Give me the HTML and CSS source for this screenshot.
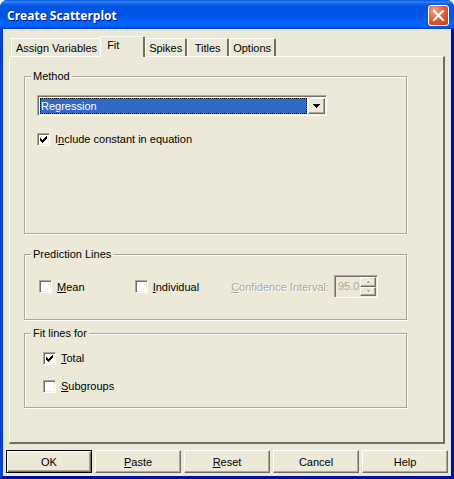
FILE: index.html
```
<!DOCTYPE html>
<html lang="en">
<head>
    <meta charset="UTF-8">
    <meta name="viewport" content="width=device-width, initial-scale=1.0">
    <title>Create Scatterplot</title>
    <link rel="stylesheet" href="styles.css">
</head>
<body>
    <main class="window">
        <header class="titlebar">
            <h1 class="title">Create Scatterplot</h1>
            <button class="close" type="button" aria-label="Close">
                <svg width="19" height="19" viewBox="0 0 19 19">
                    <path d="M5 5l9 9M14 5l-9 9" stroke="#fff" stroke-width="2" stroke-linecap="square"/>
                </svg>
            </button>
        </header>
        <form class="content">
            <div class="tabs" role="tablist">
                <button class="tab tab-first" type="button" role="tab">Assign Variables</button>
                <button class="tab active" type="button" role="tab" aria-selected="true">Fit</button>
                <button class="tab" type="button" role="tab">Spikes</button>
                <button class="tab" type="button" role="tab">Titles</button>
                <button class="tab" type="button" role="tab">Options</button>
            </div>
            <section class="panel" role="tabpanel">
                <fieldset class="group group-method">
                    <legend>Method</legend>
                    <div class="method-body">
                        <div class="combo">
                            <select class="combo-select" aria-label="Method">
                                <option>Regression</option>
                            </select>
                            <span class="combo-arrow">
                                <svg width="7" height="4" viewBox="0 0 7 4" shape-rendering="crispEdges">
                                    <path d="M0 0h7v1h-1v1h-1v1h-1v1h-1v-1h-1v-1h-1v-1h-1z"/>
                                </svg>
                            </span>
                        </div>
                        <label class="check"><input type="checkbox" checked><span>I<u>n</u>clude constant in equation</span></label>
                    </div>
                </fieldset>
                <fieldset class="group group-lines">
                    <legend>Prediction Lines</legend>
                    <div class="lines-body">
                        <label class="check check-mean"><input type="checkbox"><span><u>M</u>ean</span></label>
                        <label class="check"><input type="checkbox"><span><u>I</u>ndividual</span></label>
                        <div class="interval">
                            <label class="interval-label" for="interval"><u>C</u>onfidence Interval:</label>
                            <div class="spinner">
                                <input class="spinner-input" id="interval" type="text" value="95.0" disabled>
                                <div class="spinner-buttons">
                                    <button class="spin" type="button" aria-label="Increase" disabled>
                                        <svg width="3" height="2" viewBox="0 0 3 2" shape-rendering="crispEdges"><path d="M1 0h1v1h1v1h-3v-1h1z" fill="#aca899"/></svg>
                                    </button>
                                    <button class="spin" type="button" aria-label="Decrease" disabled>
                                        <svg width="3" height="2" viewBox="0 0 3 2" shape-rendering="crispEdges"><path d="M0 0h3v1h-1v1h-1v-1h-1z" fill="#aca899"/></svg>
                                    </button>
                                </div>
                            </div>
                        </div>
                    </div>
                </fieldset>
                <fieldset class="group">
                    <legend>Fit lines for</legend>
                    <div class="for-body">
                        <label class="check"><input type="checkbox" checked><span><u>T</u>otal</span></label>
                        <label class="check"><input type="checkbox"><span><u>S</u>ubgroups</span></label>
                    </div>
                </fieldset>
            </section>
            <footer class="actions">
                <button class="btn default" type="button">OK</button>
                <button class="btn" type="button"><u>P</u>aste</button>
                <button class="btn" type="button"><u>R</u>eset</button>
                <button class="btn" type="button">Cancel</button>
                <button class="btn" type="button">Help</button>
            </footer>
        </form>
    </main>
</body>
</html>
```
FILE: styles.css
```
:root{
    --face: #ece9d8;
    --shadow: #aca899;
    --dark: #716f64;
    --white: #fff;
    --highlight: #316ac5;
}
*,*::before,*::after{
    box-sizing: border-box;
    margin: 0;
    padding: 0;
}
body{
    font: 11px/14px "Liberation Sans", Arial, sans-serif;
    color: #000;
    background-color: var(--white);
}
button,input,select{
    font: inherit;
    color: inherit;
    border-radius: 0;
}
u{
    text-underline-offset: 1px;
}
.window{
    display: flex;
    flex-direction: column;
    min-height: 100vh;
    border: solid;
    border-width: 0 3px 3px;
    border-color: #0831d9 #0011a0 #0011a0 #0640dc;
    border-radius: 8px 8px 0 0;
    background-color: var(--face);
}
.titlebar{
    display: flex;
    align-items: center;
    justify-content: space-between;
    height: 29px;
    margin: 0 -3px;
    padding: 2px 5px 0 7px;
    border-radius: 7px 7px 0 0;
    background: linear-gradient(#0a4fd8 0, #2f87f5 2px, #0b5ee6 4px, #0054e3 8px, #0055e5 16px, #0066ff 23px, #0062f5 26px, #003dd7 29px);
}
.title{
    font: bold 12px/18px "Open Sans", "Noto Sans", sans-serif;
    color: var(--white);
    text-shadow: 1px 1px #0a1883;
}
.close{
    width: 21px;
    height: 21px;
    border: 1px solid var(--white);
    border-radius: 3px;
    background: radial-gradient(circle at 30% 25%, #f0a58c, #e2603a 45%, #c93a12);
}
.close svg{
    display: block;
}
.content{
    flex: 1;
    display: flex;
    flex-direction: column;
    padding: 7px 3px 2px;
    border: solid #dfe7f5;
    border-width: 0 1px 1px;
}
.tabs{
    display: flex;
    align-items: flex-end;
    height: 20px;
    padding: 0 4px;
}
.tab{
    min-width: 42px;
    height: 18px;
    padding: 0 3px;
    border: solid;
    border-width: 1px 2px 0 1px;
    border-color: var(--white) var(--dark) var(--white) var(--white);
    border-radius: 2px 2px 0 0;
    background-color: var(--face);
}
.tab-first{
    padding: 0 3px 0 4px;
    border-right: 0;
}
.active{
    z-index: 1;
    min-width: 45px;
    height: 21px;
    margin-bottom: -1px;
    padding: 0 6px 4px;
    text-align: left;
}
.panel{
    flex: 1;
    display: flex;
    flex-direction: column;
    gap: 6px;
    margin: 0 2px;
    padding: 12px 36px 34px 14px;
    border: solid;
    border-width: 1px 2px 2px 1px;
    border-color: var(--white) var(--dark) var(--dark) var(--white);
}
.group{
    min-width: 0;
    border: 1px solid var(--shadow);
    box-shadow: 1px 1px var(--white), inset 1px 1px var(--white);
}
.group legend{
    margin-left: 6px;
    padding: 0 2px;
    background-color: var(--face);
}
.group-method{
    flex: 1;
}
.method-body{
    padding: 12px;
}
.check{
    display: flex;
    align-items: center;
    gap: 5px;
}
.check input{
    appearance: none;
    width: 13px;
    height: 13px;
    border: 1px solid;
    border-color: var(--shadow) var(--white) var(--white) var(--shadow);
    background-color: var(--white);
    box-shadow: inset 1px 1px var(--dark), inset -1px -1px #f1efe2;
}
.check input:checked{
    background-image: url("data:image/svg+xml,%3Csvg xmlns='http://www.w3.org/2000/svg' width='11' height='11' shape-rendering='crispEdges'%3E%3Cpath d='M2 4h1v1h1v1h1v-1h1v-1h1v-1h1v-1h1v3h-1v1h-1v1h-1v1h-1v1h-1v-1h-1v-1h-1z'/%3E%3C/svg%3E");
}
.combo{
    display: flex;
    max-width: 290px;
    height: 21px;
    margin-bottom: 16px;
    padding: 2px 1px 1px 2px;
    border: 1px solid;
    border-color: var(--shadow) var(--white) var(--white) var(--shadow);
    background-color: var(--white);
    box-shadow: inset 1px 1px var(--dark), inset -1px -1px #f1efe2;
}
.combo-select{
    appearance: none;
    flex: 1;
    border: 1px dotted #000;
    outline: none;
    color: var(--white);
    background-color: var(--highlight);
}
.combo-arrow{
    display: grid;
    place-items: center;
    width: 17px;
    margin-left: 1px;
    border: 1px solid;
    border-color: var(--white) var(--dark) var(--dark) var(--white);
    background-color: var(--face);
    box-shadow: inset -1px -1px var(--shadow);
}
.group-lines{
    margin-top: 7px;
}
.lines-body{
    display: flex;
    gap: 32px;
    padding: 14px 28px 21px 14px;
}
.check-mean{
    width: 64px;
}
.interval{
    display: flex;
    align-items: center;
    gap: 5px;
    color: var(--shadow);
    white-space: nowrap;
}
.interval-label{
    text-shadow: 1px 1px var(--white);
}
.spinner{
    display: flex;
    width: 44px;
    height: 23px;
    padding: 1px;
    border: 1px solid;
    border-color: var(--shadow) var(--white) var(--white) var(--shadow);
    box-shadow: inset 1px 1px var(--dark);
}
.spinner-input{
    flex: 1;
    min-width: 0;
    padding: 0 0 2px 2px;
    border: 0;
    background: none;
}
.spinner-buttons{
    display: flex;
    flex-direction: column;
    width: 16px;
}
.spin{
    flex: 1;
    display: grid;
    place-items: center;
    border: 1px solid;
    border-color: var(--white) var(--dark) var(--dark) var(--white);
    background-color: var(--face);
    box-shadow: inset -1px -1px var(--shadow);
}
.for-body{
    display: flex;
    flex-direction: column;
    gap: 14px;
    padding: 11px 18px 14px;
}
.actions{
    display: flex;
    gap: 3px;
    margin: 0 -1px;
    padding-top: 6px;
}
.btn{
    flex: 1;
    height: 23px;
    border: 1px solid;
    border-color: var(--white) var(--dark) var(--dark) var(--white);
    background-color: var(--face);
    box-shadow: inset -1px -1px var(--shadow);
}
.default{
    border-color: #000;
    box-shadow: inset 1px 1px var(--white), inset -1px -1px var(--dark), inset -2px -2px var(--shadow);
}
```
